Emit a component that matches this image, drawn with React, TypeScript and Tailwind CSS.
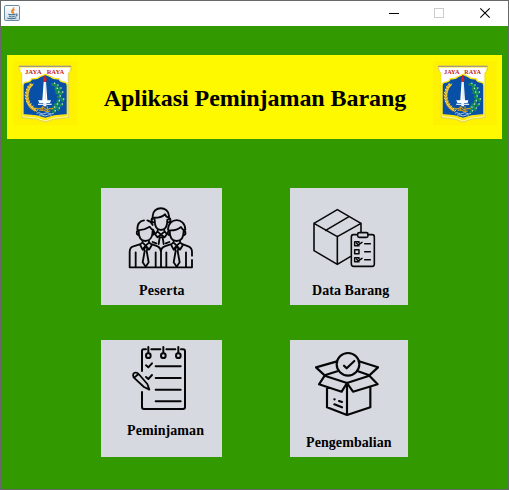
import type { ReactNode } from 'react';

function JavaIcon() {
  return (
    <svg className="mt-1 ml-[3px] block h-4 w-4" viewBox="0 0 48 48" fill="none">
      <defs>
        <linearGradient id="java" x1="0" y1="0" x2="0" y2="1">
          <stop offset="0" stopColor="#fff" />
          <stop offset="1" stopColor="#d3dfe9" />
        </linearGradient>
      </defs>
      <rect x="1.5" y="1.5" width="45" height="45" rx="4" fill="url(#java)" stroke="#6d8ba3" strokeWidth="3" />
      <path d="M29 7c2 6-9 8-6 13 1 2 3 4 3 5M32 14c-7 3-7 5-4 8 1 2 0 4-2 5" stroke="#ef8a28" strokeWidth="4" />
      <path d="M13 28c4 2 16 2 21 0M15 34c4 2 13 2 17 0M10 39c6 3 20 3 27-1M35 27c7-1 5 6-1 7" stroke="#3f6d91" strokeWidth="3.2" />
    </svg>
  );
}

function TitleBar() {
  return (
    <header className="flex h-[25px] shrink-0 justify-between bg-white">
      <JavaIcon />
      <svg className="block h-[25px] w-[138px]" viewBox="0 0 138 25" fill="none" shapeRendering="crispEdges">
        <path d="M19 12.5h10" stroke="#000" />
        <rect x="64.5" y="7.5" width="9" height="9" stroke="#ccc" />
        <path d="M110.3 7.3l9.4 9.4M119.7 7.3l-9.4 9.4" stroke="#000" strokeWidth="1.1" shapeRendering="auto" />
      </svg>
    </header>
  );
}

const leaves = [
  [160, 103], [170, 108], [179, 117], [184, 129], [177, 141], [187, 150], [174, 155],
  [183, 165], [168, 165], [174, 177], [160, 174], [162, 185], [172, 129], [168, 118],
];
const grains = [
  [95, 104], [88, 111], [84, 119], [81, 128], [80, 137], [81, 146], [84, 155], [89, 163],
  [95, 170], [102, 176], [109, 181],
];

function Crest({ viewBox }: { viewBox: string }) {
  return (
    <svg className="block h-16 w-16 bg-[#fff200]" viewBox={viewBox} preserveAspectRatio="none" fill="none">
      <path d="M57 48h157v12l-8 9v134l-43 4-27 9-27-9-43-4V69l-9-9z" fill="#ffe800" stroke="#c9c191" strokeWidth="2" />
      <path d="M60 51h150v8l-7 9v132l-41 4-26 9-26-9-41-4V68l-9-9z" fill="#ffe800" stroke="#fff" strokeWidth="2" />
      <path d="M57 49h156" stroke="#94868a" strokeWidth="3" />
      <path d="M62 53h146v12l-6 5v35H67V70l-5-5z" fill="#fff" />
      <path d="M69 108q0-12 12-12 12-1 14-10 18 1 23-5l18-8 18 8q5 6 23 5 2 9 14 10 11 0 11 12v86l-39 4-27 7-27-7-40-4z" fill="#0750a5" stroke="#ffe51a" strokeWidth="4" />
      <g fill="#c81e20" fontFamily="Liberation Serif" fontWeight="bold" fontSize="18">
        <text x="75" y="71" textLength="50" lengthAdjust="spacingAndGlyphs">JAYA</text>
        <text x="140" y="71" textLength="53" lengthAdjust="spacingAndGlyphs">RAYA</text>
      </g>
      <path d="M96 102c-20 18-24 61 11 79" stroke="#c9a02a" strokeWidth="10" />
      {grains.map(([x, y]) => (
        <path key={y} d={`M${x - 6} ${y - 2}l7 5 4-6`} stroke="#ffdf4c" strokeWidth="3" />
      ))}
      <path d="M160 103c21 13 31 48 1 78" stroke="#2b9b78" strokeWidth="4" />
      {leaves.map(([x, y], i) => (
        <g key={i}>
          <ellipse cx={x} cy={y} rx="7" ry="4.5" fill="#168b4e" transform={`rotate(${i * 47} ${x} ${y})`} />
          <circle cx={x + 4} cy={y - 3} r="2.3" fill="#d8ece8" />
        </g>
      ))}
      <path d="M131 95h7l4 56h11l-3 8h-11v10h-9v-10h-12l-4-8h13z" fill="#fff" />
      <path d="M136 97v52" stroke="#c2d1e4" strokeWidth="2" />
      <path d="M135 75l5 12-1 8h-9l-1-8z" fill="#df1b1b" />
      <path d="M114 163h41" stroke="#dbe7f5" strokeWidth="4" />
      <path d="M108 176h14q7-7 13 0t13 0h12M118 182q8-5 16 0t17 0M127 169v14M142 169v14" stroke="#c99c25" strokeWidth="3.5" />
      <path d="M110 190q6-4 12 0t13 0 13 0 13 0M116 196q7-4 13 0t13 0 12 0" stroke="#d3e2f1" strokeWidth="2.5" />
    </svg>
  );
}

function PeopleIcon() {
  return (
    <svg className="block h-[92px] w-full" viewBox="18 24 363 276" fill="none" stroke="#050607" strokeWidth="5.5" strokeLinecap="round" strokeLinejoin="round">
      <path d="M173 118v-10c0-31 49-31 49 0v10M174 113c24 2 31-6 36-10 2 6 5 9 11 10M179 119c0 21 7 31 19 31s19-10 19-31M174 113c-7 3-6 14 2 14M222 113c7 3 6 14-2 14" />
      <path d="M188 150v5l10 9 10-9v-5M187 155l-7 7 7 10 11-8 11 8 7-10-7-7M194 172h9l3 20M194 172l-3 20" />
      <path d="M127 148c0-16 7-25 20-27M157 121c8 2 13 6 16 14M128 150c21 2 28-5 36-10 4 7 7 9 11 10M131 152c0 21 8 31 20 31s22-10 22-31M129 151c-6 3-5 14 3 14M174 151c6 3 5 14-3 14" />
      <g transform="translate(245 201)">
        <path d="M-26-52c0-38 52-38 52 0M-24-50c21 2 31-5 37-10 3 7 7 9 11 10M-21-49c0 22 9 31 21 31s21-10 21-31M-22-49c-7 3-6 14 3 14M22-49c7 3 6 14-3 14" />
      </g>
      <path d="M143 183v5l9 9 10-9v-5M142 188l-7 6 8 15 9-12 10 12 9-15-8-6M147 203h11l-3 10 6 34-9 13-9-13 6-34z" />
      <path d="M236 183v5l9 9 10-9v-5M235 188l-7 6 8 15 9-12 10 12 9-15-8-6M240 203h11l-3 10 6 34-9 13-9-13 6-34z" />
      <path d="M134 193l-19 6q-11 3-11 17v46h187v-22M172 193l16 6q9 4 10 16M198 262v-47q0-12 11-16l17-6M264 193l16 6q11 4 11 17v11M122 217v45M182 217v45M214 217v45M273 217v45" />
      <path d="M173 186l11 4M223 186l-11 4" />
    </svg>
  );
}

function BoxListIcon() {
  return (
    <svg className="block h-[92px] w-full" viewBox="15 24 354 276" fill="none" stroke="#08090a" strokeWidth="4.8" strokeLinecap="round" strokeLinejoin="round">
      <path d="M157 89l71 41-71 40-70-40zM122 151l70-41M87 130v82l70 41 39-23M157 170v83M228 130v26" />
      <path d="M217 164h-12q-6 0-6 7v81q0 7 7 7h56q6 0 6-7v-81q0-7-6-7h-14M223 158h22q4 0 4 5v4q0 5-5 5h-21q-5 0-5-5v-4q0-5 5-5z" />
      <path d="M222 197h-13v-12h13v3M215 190l5 5 11-8M239 191h17M209 209h13v12h-13zM239 215h17M222 245h-13v-12h13v3M215 238l5 5 11-8M239 239h17" strokeWidth="4.5" />
    </svg>
  );
}

function ChecklistIcon() {
  return (
    <svg className="block h-20 w-full" viewBox="18 15 363 240" fill="none" stroke="#050607" strokeWidth="6" strokeLinecap="round" strokeLinejoin="round">
      <path d="M141 108V48q0-5 5-5h7M169 43h27M214 43h27M258 43h6q6 0 6 6v167q0 6-6 6H147q-6 0-6-6v-45" />
      {[160, 205, 250].map((x) => (
        <g key={x}>
          <path d={`M${x} 36v18`} />
          <circle cx={x} cy="62" r="7" />
        </g>
      ))}
      <path d="M182 94h75M182 129h75M182 164h75M182 199h75M153 91l7 6 11-12M153 126l7 6 11-12" />
      <path d="M116 127q-5-12 5-14 6-1 10 4l26 30 6 17-16-8-28-26zM119 127l11-10" strokeWidth="5.5" />
    </svg>
  );
}

function ReturnBoxIcon() {
  return (
    <svg className="block h-[92px] w-full" viewBox="15 15 354 276" fill="none" stroke="#050607" strokeWidth="6.5" strokeLinecap="round" strokeLinejoin="round">
      <circle cx="189" cy="88" r="34" />
      <path d="M177 92l8 8 23-22M156 79l-63 18 26 24 38-12M222 79l57 18-26 24-34-12M119 122l67 22 67-22M119 122l-17 26 68 22 16-26 18 26 74-22-25-26M126 156v61l60 23 70-23v-61M186 145v95" />
      <path d="M148 193h1M162 198l9 3M148 208l23 9" />
    </svg>
  );
}

function MenuButton({ label, icon, labelClass }: { label: string; icon: ReactNode; labelClass: string }) {
  return (
    <button className="flex h-[117px] w-full flex-col items-start bg-[#d6d9df] text-left">
      {icon}
      <span className={`mt-px block h-5 text-[14px] leading-5 font-bold whitespace-nowrap ${labelClass}`}>{label}</span>
    </button>
  );
}

export default function App() {
  return (
    <div className="flex h-[490px] w-[509px] flex-col overflow-hidden border border-[#66686a] bg-[#339900] font-['Liberation_Serif',serif] text-black">
      <TitleBar />
      <div className="mt-[29px] mr-[6px] ml-[6px] flex h-[84px] shrink-0 items-start justify-between bg-[#fff900] pt-[6px] pr-[5px] pl-[6px]">
        <Crest viewBox="39 33 192 192" />
        <h1 className="mt-[21px] text-[24px] leading-8 font-bold tracking-[-0.06px] whitespace-nowrap">Aplikasi Peminjaman Barang</h1>
        <Crest viewBox="40 33 204 192" />
      </div>
      <main className="mt-[49px] ml-[100px] grid grid-cols-[121px_118px] gap-x-[68px] gap-y-[35px]">
        <MenuButton label="Peserta" icon={<PeopleIcon />} labelClass="pl-[38px] tracking-[0.2px]" />
        <MenuButton label="Data Barang" icon={<BoxListIcon />} labelClass="pl-[22px] tracking-[0.06px]" />
        <MenuButton label="Peminjaman" icon={<ChecklistIcon />} labelClass="pl-[26px] tracking-[0.08px]" />
        <MenuButton label="Pengembalian" icon={<ReturnBoxIcon />} labelClass="pl-4 tracking-[0.08px]" />
      </main>
    </div>
  );
}
